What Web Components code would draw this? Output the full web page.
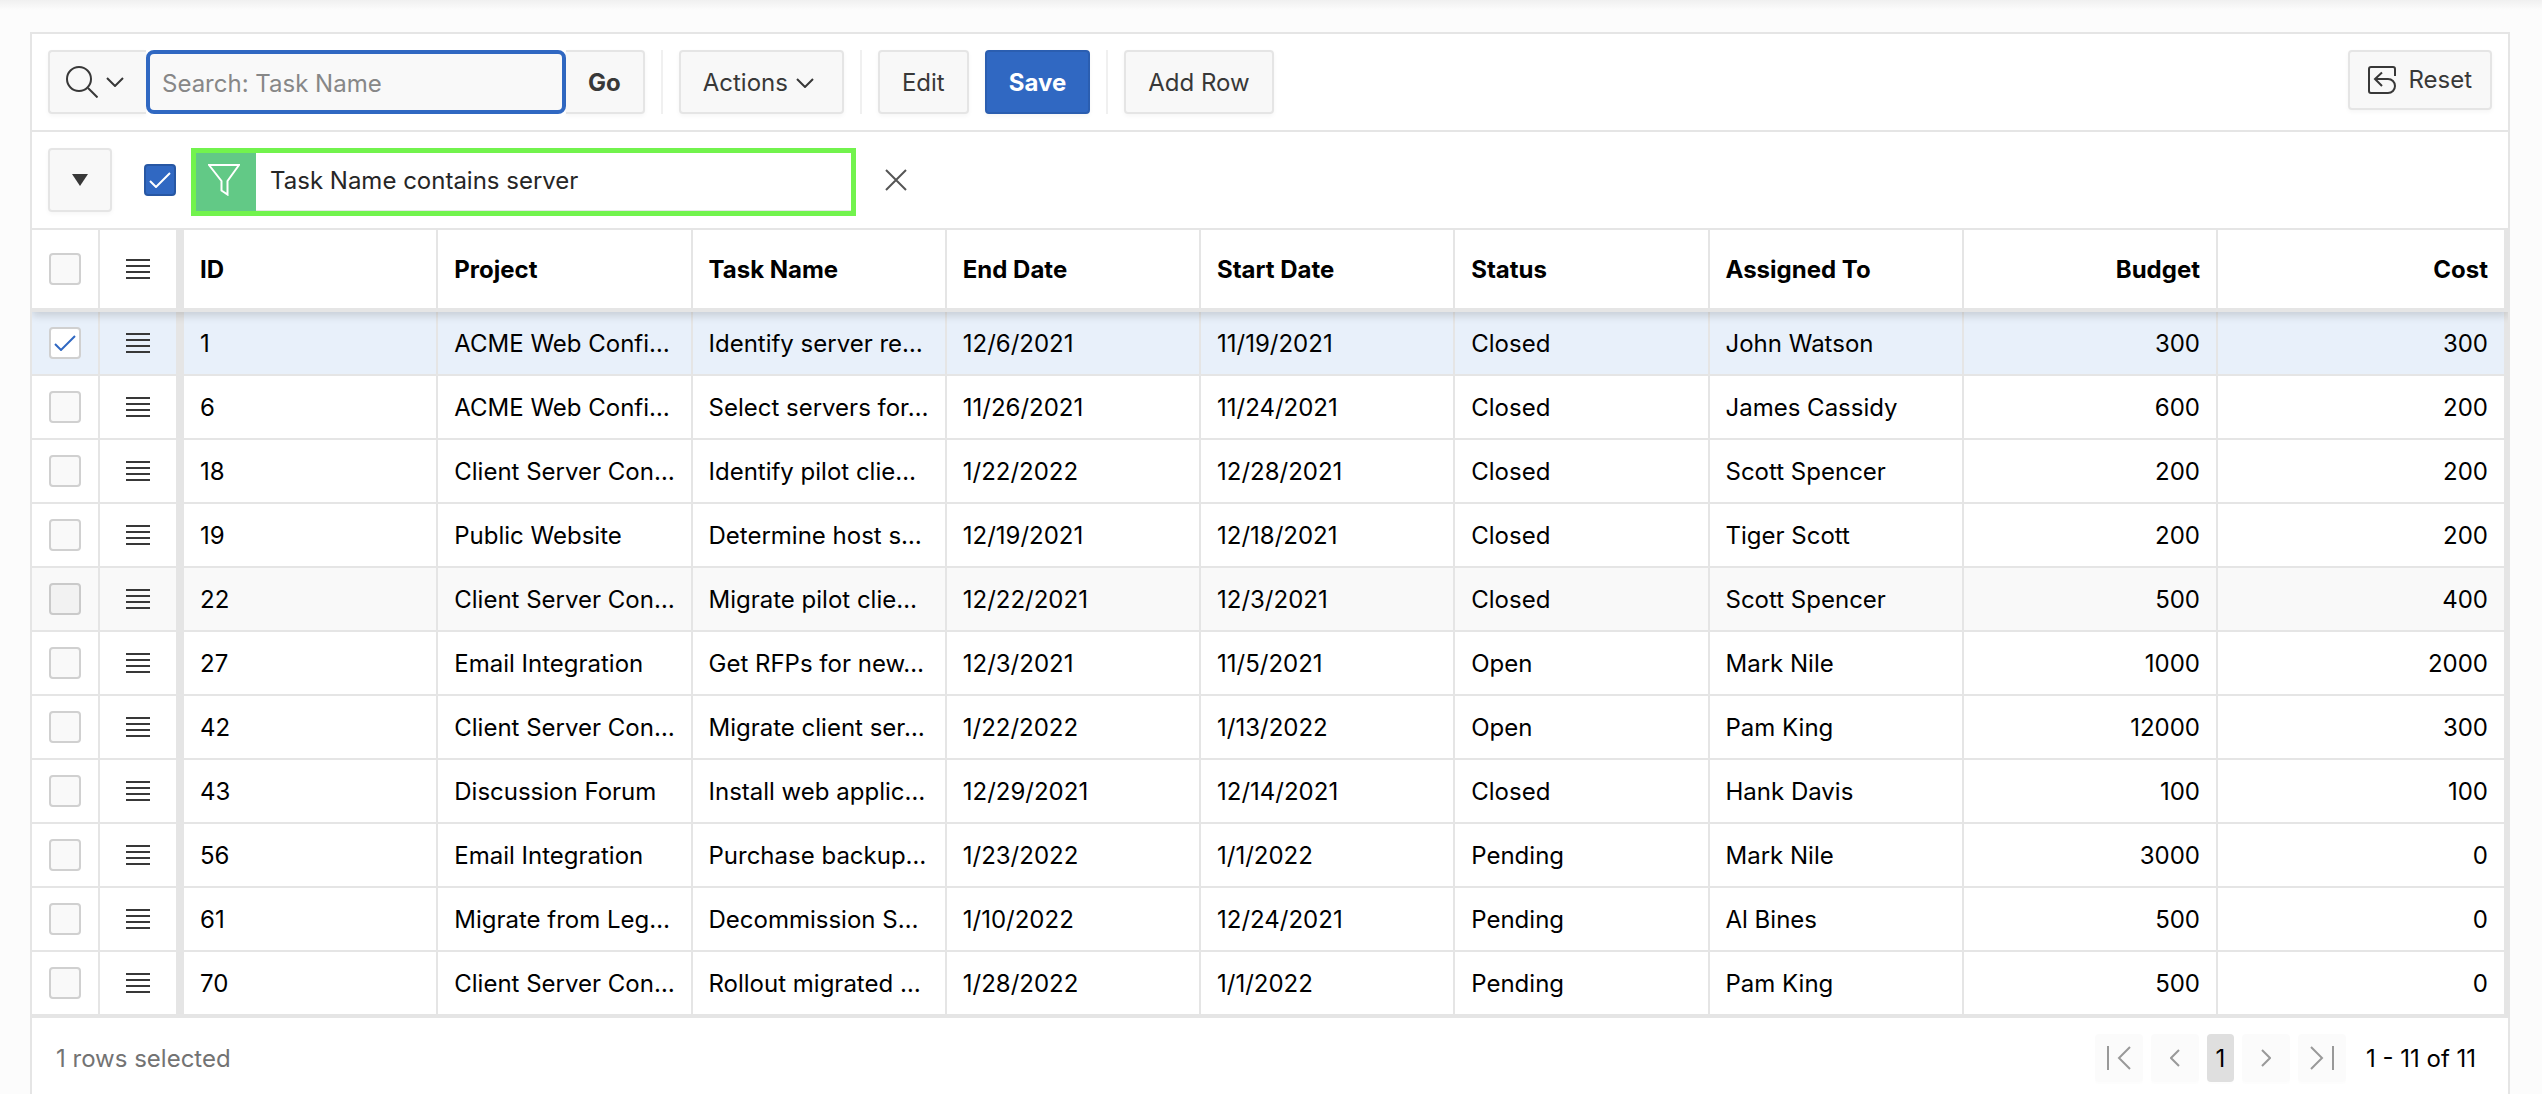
<!DOCTYPE html>
<html lang="en">
<head>
<meta charset="utf-8">
<title>Tasks</title>
<style>
html,body{margin:0;height:100%}
body{background:#fcfcfc;color:#000;font:24px/32px Inter,"Liberation Sans",sans-serif;overflow:hidden}
</style>
</head>
<body>
<task-page></task-page>

<script>
const base = `
*{box-sizing:border-box}
:host{display:block}
button,input{font:inherit;color:inherit;margin:0}
button{cursor:pointer}
svg{display:block;fill:none;stroke:currentColor;stroke-width:2}
`;

const icons = {
  search: [32, 32, '<circle cx="13" cy="13" r="12"/><path d="M22 22l9.500 9.500"/>'],
  chevron: [18, 10, '<path d="M1 1l8 8 8-8"/>'],
  caret: [16, 12, '<path d="M0 0h16l-8 12z" fill="currentColor" stroke="none"/>'],
  funnel: [32, 32, '<path d="M1 1h30L19.500 17v13.500l-6-4V17z"/>'],
  close: [22, 22, '<path d="M1 1l20 20M21 1L1 21"/>'],
  reset: [28, 28, '<path d="M27 10V3a2 2 0 0 0-2-2H3a2 2 0 0 0-2 2v22a2 2 0 0 0 2 2h17a7 7 0 0 0 0-14H7M14 6.500L7 13l7 7"/>'],
  first: [24, 24, '<path d="M1 0v24M23 1L12 12l11 11"/>'],
  prev: [10, 18, '<path d="M9 1L1 9l8 8"/>'],
  next: [10, 18, '<path d="M1 1l8 8-8 8"/>'],
  last: [24, 24, '<path d="M23 0v24M1 1l11 11L1 23"/>'],
  menu: [24, 20, '<path d="M0 1h24M0 7h24M0 13h24M0 19h24"/>']
};

function define(name, render) {
  customElements.define(name, class extends HTMLElement {
    connectedCallback() {
      if (this.shadowRoot) return;
      this.attachShadow({ mode: 'open' }).innerHTML = render(this);
    }
  });
}

define('line-icon', el => {
  const [w, h, body] = icons[el.getAttribute('name')];
  return `<style>${base}:host{flex:none}</style>
    <svg width="${w}" height="${h}" viewBox="0 0 ${w} ${h}" aria-hidden="true">${body}</svg>`;
});

define('tool-button', el => `<style>${base}
  :host{flex:none}
  button{display:flex;align-items:center;justify-content:center;gap:8px;height:64px;padding:2px 22px 0;
    border:2px solid #e5e5e5;border-radius:4px;background:#f8f8f8;color:#383838;
    box-shadow:0 2px 4px rgba(0,0,0,.04)}
  :host([kind=hot]) button{background:#3068c2;border-color:#2b5eb0;color:#fff;font-weight:700}
  :host([kind=go]) button{font-weight:700;border-left:0;border-radius:0 4px 4px 0}
  :host([kind=search]) button{padding:0 22px 0 16px;border-right:0;border-radius:4px 0 0 4px}
  :host([kind=menu]) button{padding-right:28px}
  :host([kind=square]) button{width:64px;padding:0}
  :host([kind=reset]) button{height:60px;gap:12px;padding:0 18px}
  </style><button type="button" aria-label="${el.getAttribute('label')}"><slot></slot></button>`);

define('check-box', el => `<style>${base}
  :host{display:flex;flex:none;align-items:center;justify-content:center}
  label{display:grid;place-items:center;width:32px;height:32px}
  input,svg{grid-area:1/1}
  input{appearance:none;width:32px;height:32px;border:2px solid #d0d0d0;border-radius:4px;background:#f9f9f9}
  svg{display:none;color:#3068c2;pointer-events:none}
  input:checked{background:#fff}
  input:checked + svg{display:block}
  :host([hot]) input{background:#3068c2;border-color:#2757a3}
  :host([hot]) svg{color:#fff}
  :host([dim]) input{background:#f2f2f2;border-color:#cacaca}
  </style><label><input type="checkbox" aria-label="${el.getAttribute('label')}"${el.hasAttribute('checked') ? ' checked' : ''}>
  <svg width="22" height="16" viewBox="0 0 22 16" aria-hidden="true"><path d="M1 9l6 6L21 1"/></svg></label>`);

define('search-group', () => `<style>${base}
  :host{display:flex;flex:none}
  input{width:420px;height:64px;padding:2px 12px 0;border:4px solid #3068c2;border-radius:8px;background:#f9f9f9;outline:0;color:#383838}
  input::placeholder{color:#878787;opacity:1}
  </style>
  <tool-button kind="search" label="Select columns to search"><line-icon name="search"></line-icon><line-icon name="chevron"></line-icon></tool-button>
  <input type="text" aria-label="Search" placeholder="Search: Task Name">
  <tool-button kind="go" label="Go">Go</tool-button>`);

define('grid-toolbar', () => `<style>${base}
  :host{display:flex;gap:16px;padding:16px;border-bottom:2px solid #e5e5e5}
  i{width:2px;background:#f0f0f0}
  .end{margin-left:auto}
  </style>
  <search-group></search-group><i></i>
  <tool-button kind="menu" label="Actions">Actions<line-icon name="chevron"></line-icon></tool-button><i></i>
  <tool-button label="Edit">Edit</tool-button>
  <tool-button kind="hot" label="Save">Save</tool-button><i></i>
  <tool-button label="Add Row">Add Row</tool-button>
  <tool-button class="end" kind="reset" label="Reset"><line-icon name="reset"></line-icon>Reset</tool-button>`);

define('filter-bar', () => `<style>${base}
  :host{display:flex;align-items:flex-start;height:98px;padding:16px;border-bottom:2px solid #e5e5e5}
  check-box{height:64px;margin:0 15px 0 32px}
  .chip{display:flex;width:665px;height:68px;border:5px solid #72f34d;color:#262626}
  .mark{width:60px;padding:11px 12px;background:#62c986;color:#fff}
  .text{flex:1;padding:0 14px;line-height:56px;border-bottom:1px solid #e5e5e5;white-space:nowrap}
  .close{display:grid;place-items:center;width:48px;height:64px;margin-left:16px;padding:0;border:0;background:none;color:#555}
  </style>
  <tool-button kind="square" label="Collapse filters"><line-icon name="caret"></line-icon></tool-button>
  <check-box hot checked label="Enable filter"></check-box>
  <div class="chip"><span class="mark"><line-icon name="funnel"></line-icon></span><span class="text">Task Name contains server</span></div>
  <button class="close" type="button" aria-label="Remove filter"><line-icon name="close"></line-icon></button>`);

const columns = ['ID', 'Project', 'Task Name', 'End Date', 'Start Date', 'Status', 'Assigned To', 'Budget', 'Cost'];
const rows = [
  ['1', 'ACME Web Confi…', 'Identify server re…', '12/6/2021', '11/19/2021', 'Closed', 'John Watson', '300', '300'],
  ['6', 'ACME Web Confi…', 'Select servers for…', '11/26/2021', '11/24/2021', 'Closed', 'James Cassidy', '600', '200'],
  ['18', 'Client Server Con…', 'Identify pilot clie…', '1/22/2022', '12/28/2021', 'Closed', 'Scott Spencer', '200', '200'],
  ['19', 'Public Website', 'Determine host s…', '12/19/2021', '12/18/2021', 'Closed', 'Tiger Scott', '200', '200'],
  ['22', 'Client Server Con…', 'Migrate pilot clie…', '12/22/2021', '12/3/2021', 'Closed', 'Scott Spencer', '500', '400'],
  ['27', 'Email Integration', 'Get RFPs for new…', '12/3/2021', '11/5/2021', 'Open', 'Mark Nile', '1000', '2000'],
  ['42', 'Client Server Con…', 'Migrate client ser…', '1/22/2022', '1/13/2022', 'Open', 'Pam King', '12000', '300'],
  ['43', 'Discussion Forum', 'Install web applic…', '12/29/2021', '12/14/2021', 'Closed', 'Hank Davis', '100', '100'],
  ['56', 'Email Integration', 'Purchase backup…', '1/23/2022', '1/1/2022', 'Pending', 'Mark Nile', '3000', '0'],
  ['61', 'Migrate from Leg…', 'Decommission S…', '1/10/2022', '12/24/2021', 'Pending', 'Al Bines', '500', '0'],
  ['70', 'Client Server Con…', 'Rollout migrated …', '1/28/2022', '1/1/2022', 'Pending', 'Pam King', '500', '0']
];
const selected = '1', hovered = '22';

define('data-grid', () => `<style>${base}
  :host{overflow:hidden}
  table{width:100%;table-layout:fixed;border-collapse:separate;border-spacing:0}
  .c1{width:68px}.c2{width:84px}.c11{width:290px}
  th,td{height:64px;padding:2px 14px 0 16px;border:solid #e5e5e5;border-width:0 2px 2px 0;text-align:left;white-space:nowrap;overflow:hidden}
  thead{position:relative;z-index:1;box-shadow:0 4px 8px rgba(0,0,0,.14)}
  th{height:82px;background:#fff;border-bottom-width:4px;font-weight:700}
  .pick,.menu{padding:0}
  .menu{border-right-width:8px}
  .menu button{display:grid;place-items:center;width:100%;height:32px;padding:0;border:0;background:none;color:#383838}
  .num{text-align:right;padding-right:16px}
  :is(th,td):last-child{border-right-width:4px}
  tbody tr:last-child td{height:66px;border-bottom-width:4px}
  .on td{background:#e8f0fa}
  .hover td{background:#f9f9f9}
  </style>
  <table>
    <colgroup><col class="c1"><col class="c2">${columns.map((c, i) => `<col class="c${i + 3}">`).join('')}</colgroup>
    <thead><tr><th class="pick"><check-box label="Select all"></check-box></th>
      <th class="menu"><button type="button" aria-label="Selection actions"><line-icon name="menu"></line-icon></button></th>
      ${columns.map((c, i) => `<th${i > 6 ? ' class="num"' : ''}>${c}</th>`).join('')}</tr></thead>
    <tbody>${rows.map(r => `<tr class="${r[0] === selected ? 'on' : r[0] === hovered ? 'hover' : ''}">
      <td class="pick"><check-box label="Select row ${r[0]}"${r[0] === selected ? ' checked' : ''}${r[0] === hovered ? ' dim' : ''}></check-box></td>
      <td class="menu"><button type="button" aria-label="Row ${r[0]} actions"><line-icon name="menu"></line-icon></button></td>
      ${r.map((c, i) => `<td${i > 6 ? ' class="num"' : ''}>${c}</td>`).join('')}</tr>`).join('')}</tbody>
  </table>`);

define('grid-footer', () => `<style>${base}
  :host{display:flex;align-items:center;gap:8px;padding:16px 24px}
  span{padding-top:2px}
  .status{margin-right:auto;color:#737373}
  button{display:grid;place-items:center;width:48px;height:48px;padding:0;border:0;border-radius:4px;background:#fbfbfb;color:#999;box-shadow:0 2px 2px rgba(0,0,0,.01)}
  .page{width:27px;padding-top:2px;background:#dfdfdf;color:#000}
  .range{min-width:118px;margin-left:12px}
  </style>
  <span class="status">1 rows selected</span>
  <button type="button" aria-label="First page" disabled><line-icon name="first"></line-icon></button>
  <button type="button" aria-label="Previous page" disabled><line-icon name="prev"></line-icon></button>
  <button type="button" class="page" aria-current="page">1</button>
  <button type="button" aria-label="Next page" disabled><line-icon name="next"></line-icon></button>
  <button type="button" aria-label="Last page" disabled><line-icon name="last"></line-icon></button>
  <span class="range">1 - 11 of 11</span>`);

define('task-page', () => `<style>${base}
  :host{padding:32px 32px 32px 30px;background:linear-gradient(#f0f0f0,#fcfcfc 10px)}
  section{border:2px solid #e5e5e5;background:#fff}
  </style>
  <section aria-label="Tasks"><grid-toolbar></grid-toolbar><filter-bar></filter-bar><data-grid></data-grid><grid-footer></grid-footer></section>`);
</script>
</body>
</html>
